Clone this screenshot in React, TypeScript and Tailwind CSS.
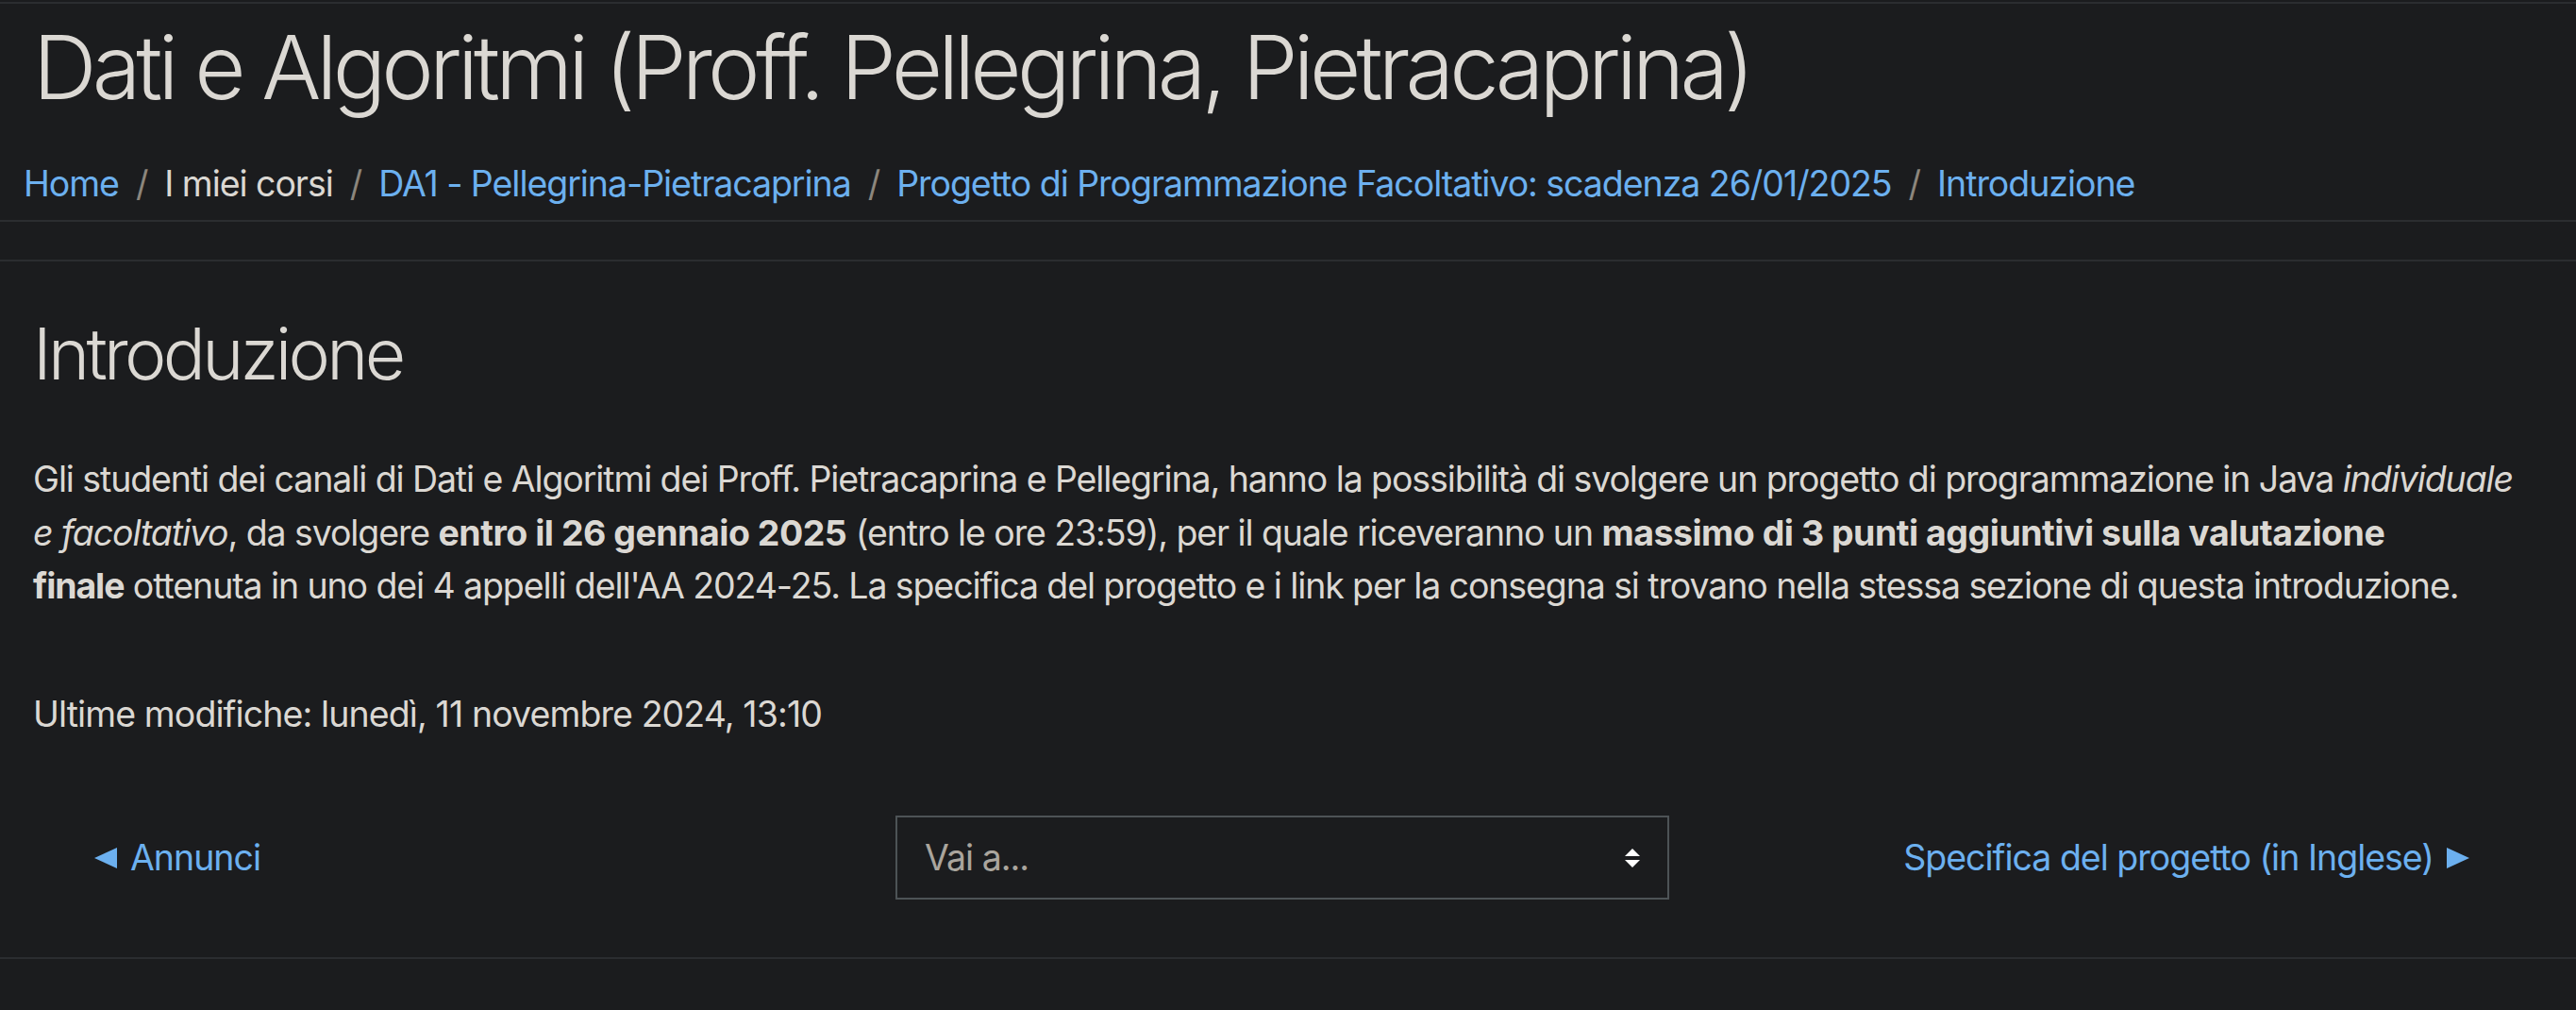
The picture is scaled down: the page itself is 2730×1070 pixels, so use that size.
const crumbs = [
  { label: "Home", link: true },
  { label: "I miei corsi", link: false },
  { label: "DA1 - Pellegrina-Pietracaprina", link: true },
  { label: "Progetto di Programmazione Facoltativo: scadenza 26/01/2025", link: true },
  { label: "Introduzione", link: true },
];

function LeftTriangle() {
  return (
    <svg width="24" height="22" viewBox="0 0 24 22" className="shrink-0">
      <path d="M0 11 L24 0 L24 22 Z" fill="#6cb0ef" />
    </svg>
  );
}

function RightTriangle() {
  return (
    <svg width="24" height="22" viewBox="0 0 24 22" className="shrink-0">
      <path d="M24 11 L0 0 L0 22 Z" fill="#6cb0ef" />
    </svg>
  );
}

export default function App() {
  return (
    <div className="min-h-screen bg-[#1b1c1e] font-['Inter',sans-serif] text-[#dbd8d3]">
      <div className="h-[2px]" />
      <header className="border-t-2 border-b-2 border-[#2b2d30] pb-[10px]">
        <h1 className="mt-[11px] pl-[35px] text-[93.75px] font-light leading-[1.2] tracking-[-4.8px] whitespace-nowrap">
          Dati e Algoritmi (Proff. Pellegrina, Pietracaprina)
        </h1>
        <nav className="mt-[39.5px] pl-[25px] text-[37.5px] leading-[1.5] tracking-[-1.05px]">
          <ol className="flex items-center whitespace-nowrap">
            {crumbs.map((c, i) => (
              <li key={c.label} className="flex items-center">
                {i > 0 && <span className="px-[18px] text-[#8c867d]">/</span>}
                <span className={c.link ? "text-[#6cb0ef]" : "text-[#dbd8d3]"}>{c.label}</span>
              </li>
            ))}
          </ol>
        </nav>
      </header>

      <main className="mt-[40px] border-t-2 border-b-2 border-[#2b2d30] pb-[61px] pl-[35px] pr-[47px]">
        <h2 className="pt-[53px] text-[75px] font-light leading-[1.2] tracking-[-3.7px]">Introduzione</h2>

        <p className="mt-[60px] text-[37.5px] leading-[56.25px] tracking-[-1.1px] whitespace-nowrap">
          Gli studenti dei canali di Dati e Algoritmi dei Proff. Pietracaprina e Pellegrina, hanno la possibilità di
          svolgere un progetto di programmazione in Java <em>individuale</em>
          <br />
          <em>e facoltativo</em>, da svolgere <strong className="tracking-[-0.5px]">entro il 26 gennaio 2025</strong>{" "}
          (entro le ore 23:59), per il quale riceveranno un{" "}
          <strong className="tracking-[-0.5px]">massimo di 3 punti aggiuntivi sulla valutazione</strong>
          <br />
          <strong>finale</strong> ottenuta in uno dei 4 appelli dell'AA 2024-25. La specifica del progetto e i link per
          la consegna si trovano nella stessa sezione di questa introduzione.
        </p>

        <div className="mt-[80px] text-[37.5px] leading-[56.25px] tracking-[-0.9px]">
          Ultime modifiche: lunedì, 11 novembre 2024, 13:10
        </div>

        <div className="mt-[79px] grid grid-cols-[1fr_820px_1fr] items-center text-[37.5px] leading-[56.25px] tracking-[-1px]">
          <div className="flex items-center gap-[14px] pl-[65px] text-[#6cb0ef]">
            <LeftTriangle />
            <span>Annunci</span>
          </div>
          <div className="flex h-[89px] items-center justify-between border-2 border-[#4d5356] pl-[29px] pr-[29px] text-[#aaa59d]">
            <span>Vai a...</span>
            <svg width="16" height="20" viewBox="0 0 16 20">
              <path d="M8 0 L16 8 L0 8 Z" fill="#ffffff" />
              <path d="M0 12 L16 12 L8 20 Z" fill="#ffffff" />
            </svg>
          </div>
          <div className="flex items-center justify-end gap-[14px] pr-[66px] text-[#6cb0ef]">
            <span>Specifica del progetto (in Inglese)</span>
            <RightTriangle />
          </div>
        </div>
      </main>
    </div>
  );
}
